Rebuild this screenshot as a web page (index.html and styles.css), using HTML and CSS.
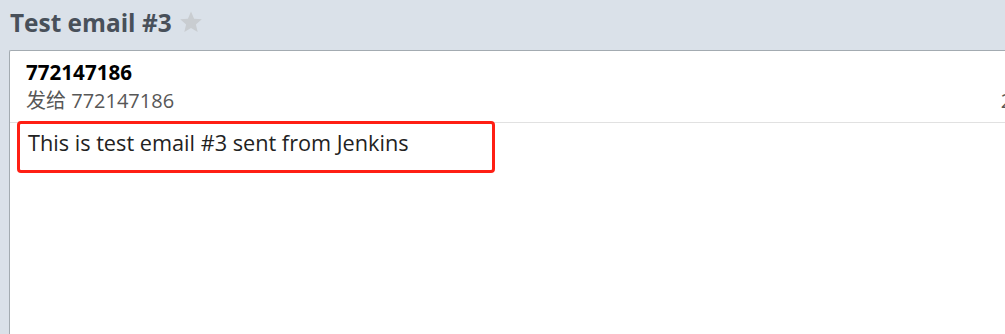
FILE: index.html
```html
<!DOCTYPE html>
<html lang="zh-cn">
<head>
<meta charset="UTF-8">
<meta name="viewport" content="width=device-width, initial-scale=1.0">
<title>Test email #3</title>
<link rel="stylesheet" href="styles.css">
</head>
<body>

<div class="titulo">
    <h1>Test email #3</h1>
    <svg class="estrela" width="24" height="24" viewBox="0 0 24 24">
        <path d="M12 1.5l3.1 7.2 7.7.6-5.9 5.1 1.8 7.6L12 17.9 5.3 22l1.8-7.6L1.2 9.3l7.7-.6z" fill="#c9cdd1"/>
    </svg>
</div>

<div class="painel">
    <div class="cabecalho">
        <div class="remetente">772147186</div>
        <div class="linha">
            <span class="destino">发给 772147186</span>
            <span class="data">2023-05-12</span>
        </div>
    </div>
    <div class="corpo">This is test email #3 sent from Jenkins</div>
</div>

</body>
</html>
```

FILE: styles.css
```css
body {
    margin: 0;
    background-color: #dae1e9;
    font-family: "Open Sans", "Noto Sans CJK SC", sans-serif;
    overflow: hidden;
    height: 334px;
}
.titulo {
    display: flex;
    align-items: center;
    gap: 7px;
    height: 44px;
    padding: 0 0 6px 10px;
}
.titulo h1 {
    margin: 0;
    font-size: 24.4px;
    font-weight: 700;
    color: #48505a;
}
.estrela {
    margin-top: -1px;
}
.painel {
    margin-left: 9px;
    background-color: #ffffff;
    border: 1px solid #a3abb1;
    border-right: none;
    border-bottom: none;
    border-radius: 2px 0 0 0;
    height: 283px;
    overflow: hidden;
}
.cabecalho {
    padding: 8px 0 8px 16px;
    border-bottom: 1px solid #e1e1e1;
}
.remetente {
    font-size: 20.6px;
    font-weight: 700;
    color: #000000;
    line-height: 26px;
}
.linha {
    display: flex;
    justify-content: space-between;
    margin-top: 3px;
    line-height: 26px;
    font-size: 20px;
    color: #575757;
}
.data {
    margin-right: -100px;
}
.corpo {
    box-sizing: border-box;
    width: 478px;
    margin: -2px 0 0 7px;
    padding: 5px 8px 13px;
    border: 3px solid #ff1f14;
    border-radius: 4px;
    font-size: 21.7px;
    color: #222222;
    line-height: 28px;
}
```
